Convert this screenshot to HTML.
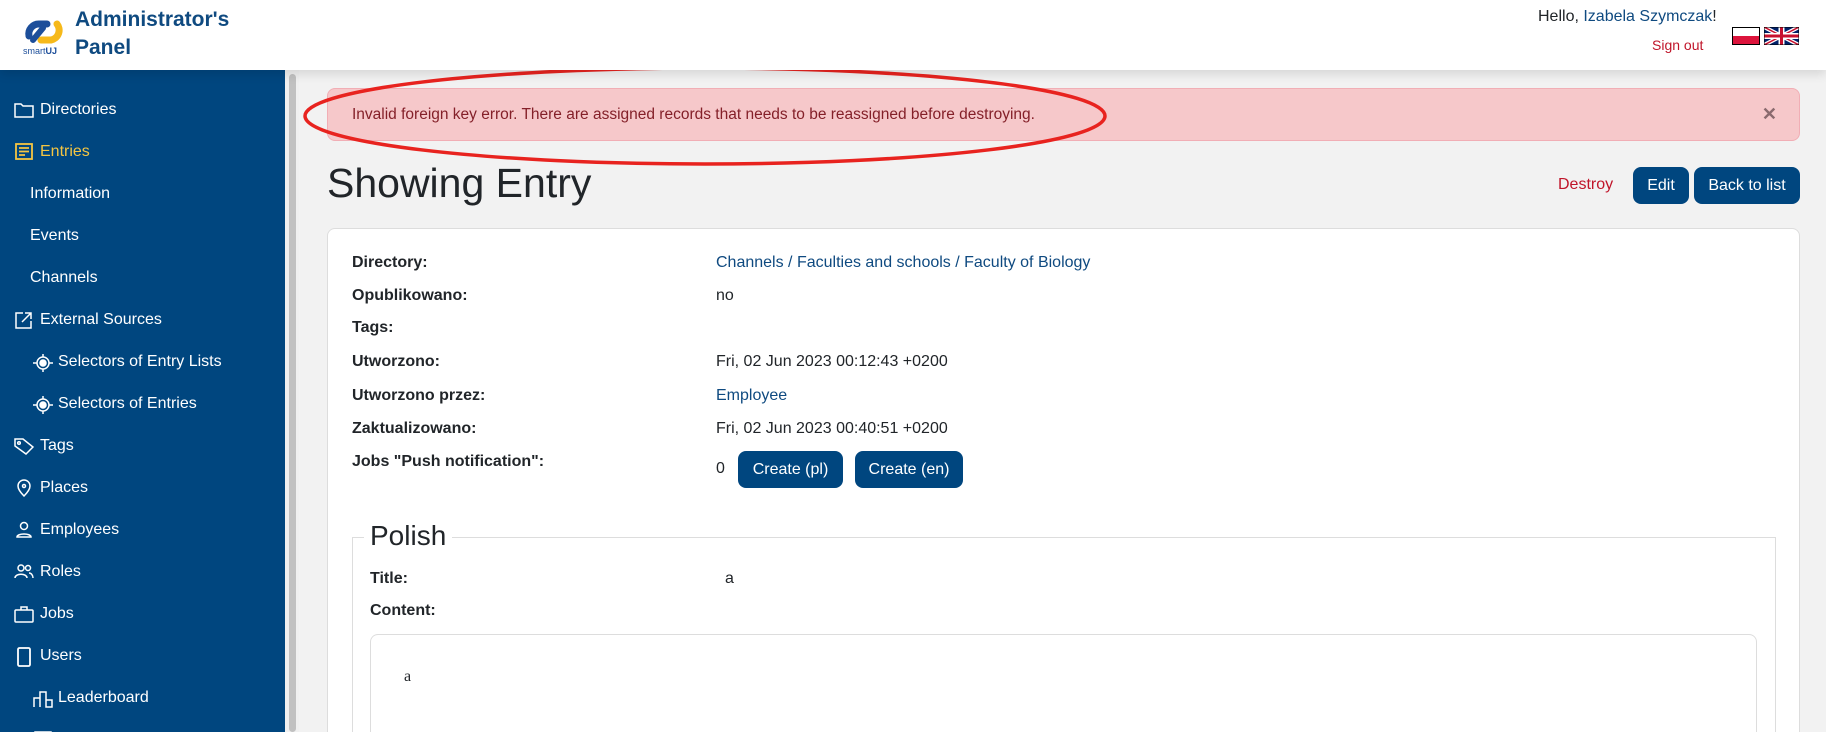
<!DOCTYPE html>
<html style="overflow:hidden;width:1826px;height:732px"><head><meta charset="utf-8"><style>
*{box-sizing:border-box;margin:0;padding:0}
body{width:1826px;height:732px;overflow:hidden;background:#f2f2f2;font-family:"Liberation Sans",sans-serif;color:#212529;position:relative}
.hdr{position:absolute;left:0;top:0;width:1826px;height:70px;background:#fff;box-shadow:0 4px 10px rgba(0,0,0,.12);z-index:2}
.title{position:absolute;left:75px;top:6px;font-size:21px;font-weight:bold;color:#0f4a80;line-height:28px}
.side{position:absolute;left:0;top:70px;width:285px;height:662px;background:#00467f}
.si{position:absolute;color:#fff;font-size:16px;line-height:20px;white-space:nowrap}
.si svg{position:absolute;left:-26px;top:1px}
.scroll{position:absolute;left:285px;top:70px;width:14px;height:662px;background:#f0f0f0}
.thumb{position:absolute;left:289px;top:74px;width:7px;height:658px;background:#c1c1c1;border-radius:4px}
.alert{position:absolute;left:327px;top:88px;width:1473px;height:53px;background:#f6c8ca;border:1px solid #f1aeb5;border-radius:8px;color:#842029;font-size:15.5px;line-height:51px;padding-left:24px}
.x{position:absolute;right:22px;top:0;color:#8a6a6e;font-weight:bold;font-size:18px}
h1{position:absolute;left:327px;top:160px;font-size:41px;font-weight:normal;color:#212529}
.btn{position:absolute;background:#00467f;color:#fff;border-radius:8px;font-size:16px;text-align:center}
.card{position:absolute;left:327px;top:228px;width:1473px;height:504px;background:#fff;border:1px solid #ddd;border-bottom:none;border-radius:8px 8px 0 0}
.l{position:absolute;left:352px;font-weight:bold;font-size:16px}
.v{position:absolute;left:716px;font-size:16px}
a{color:#0f4a80;text-decoration:none}
</style></head><body>
<div class="hdr">
<svg style="position:absolute;left:21px;top:10px" width="46" height="46" viewBox="0 0 46 46">
<path d="M8 26 a10 10 0 0 1 10-12 l8 0" stroke="#1c4e9a" stroke-width="7" fill="none" stroke-linecap="round"/>
<path d="M36 14 a10 10 0 0 1 -6 16 l-10 0" stroke="#f6b91a" stroke-width="7" fill="none" stroke-linecap="round"/>
<path d="M12 30 l10-12" stroke="#1c4e9a" stroke-width="6" stroke-linecap="round"/>
<text x="2" y="44" font-size="9" fill="#1c4e9a" font-family="Liberation Sans">smart<tspan font-weight="bold">UJ</tspan></text>
</svg>
<div class="title">Administrator's<br>Panel</div>
<div style="position:absolute;left:1538px;top:8px;font-size:16px">Hello, <a>Izabela Szymczak</a>!</div>
<div style="position:absolute;left:1652px;top:37px;font-size:14px;color:#c0152a">Sign out</div>
<div style="position:absolute;left:1732px;top:27px;width:28px;height:18px;border:1px solid #000"><div style="height:8px;background:#fff"></div><div style="height:8px;background:#dc143c"></div></div>
<svg style="position:absolute;left:1764px;top:27px" width="35" height="18" viewBox="0 0 35 18"><rect width="35" height="18" fill="#012169"/><path d="M0 0L35 18M35 0L0 18" stroke="#fff" stroke-width="4"/><path d="M0 0L35 18M35 0L0 18" stroke="#c8102e" stroke-width="1.5"/><path d="M17.5 0V18M0 9H35" stroke="#fff" stroke-width="6"/><path d="M17.5 0V18M0 9H35" stroke="#c8102e" stroke-width="3"/><rect width="35" height="18" fill="none" stroke="#000"/></svg>
</div>
<div class="side">
<div class="si" style="left:40px;top:30px"><svg width="20" height="18" viewBox="0 0 20 18" fill="none" stroke="#fff" stroke-width="1.5"><path d="M1 3h6l2 2h10v11H1z"/></svg>Directories</div>
<div class="si" style="left:40px;top:72px;color:#f4c542"><svg width="20" height="18" viewBox="0 0 20 18" fill="none" stroke="#f4c542" stroke-width="1.8"><rect x="2" y="1" width="16" height="15"/><path d="M5 5h10M5 8.5h10M5 12h6"/></svg>Entries</div>
<div class="si" style="left:30px;top:114px">Information</div>
<div class="si" style="left:30px;top:156px">Events</div>
<div class="si" style="left:30px;top:198px">Channels</div>
<div class="si" style="left:40px;top:240px"><svg width="20" height="18" viewBox="0 0 20 18" fill="none" stroke="#fff" stroke-width="1.5"><path d="M9 2H2v15h15v-7M11 2h6v6M17 2L8 11"/></svg>External Sources</div>
<div class="si" style="left:58px;top:282px"><svg width="22" height="20" viewBox="0 0 22 20" fill="none" stroke="#fff" stroke-width="1.5"><circle cx="11" cy="10" r="6"/><circle cx="11" cy="10" r="3" fill="#fff"/><path d="M11 1v3M11 16v3M1 10h4M17 10h4"/></svg>Selectors of Entry Lists</div>
<div class="si" style="left:58px;top:324px"><svg width="22" height="20" viewBox="0 0 22 20" fill="none" stroke="#fff" stroke-width="1.5"><circle cx="11" cy="10" r="6"/><circle cx="11" cy="10" r="3" fill="#fff"/><path d="M11 1v3M11 16v3M1 10h4M17 10h4"/></svg>Selectors of Entries</div>
<div class="si" style="left:40px;top:366px"><svg width="20" height="18" viewBox="0 0 20 18" fill="none" stroke="#fff" stroke-width="1.5"><path d="M1 2h8l10 8-7 7-11-8z"/><circle cx="5" cy="6" r="1.3"/></svg>Tags</div>
<div class="si" style="left:40px;top:408px"><svg width="20" height="18" viewBox="0 0 20 18" fill="none" stroke="#fff" stroke-width="1.5"><path d="M10 17c-4-4-6-7-6-10a6 6 0 0 1 12 0c0 3-2 6-6 10z"/><circle cx="10" cy="7" r="1.5"/></svg>Places</div>
<div class="si" style="left:40px;top:450px"><svg width="20" height="18" viewBox="0 0 20 18" fill="none" stroke="#fff" stroke-width="1.5"><circle cx="10" cy="5" r="3.5"/><path d="M3 16c0-4 14-4 14 0z"/></svg>Employees</div>
<div class="si" style="left:40px;top:492px"><svg width="20" height="18" viewBox="0 0 20 18" fill="none" stroke="#fff" stroke-width="1.5"><circle cx="7" cy="5" r="3"/><circle cx="14" cy="5" r="2.5"/><path d="M1 15c0-5 12-5 12 0M15 10c2 0 4 2 4 5"/></svg>Roles</div>
<div class="si" style="left:40px;top:534px"><svg width="20" height="18" viewBox="0 0 20 18" fill="none" stroke="#fff" stroke-width="1.5"><rect x="1" y="5" width="18" height="12" rx="1"/><path d="M7 5V2h6v3"/></svg>Jobs</div>
<div class="si" style="left:40px;top:576px"><svg width="20" height="20" viewBox="0 0 20 20" fill="none" stroke="#fff" stroke-width="1.8"><rect x="4" y="1" width="12" height="18" rx="1.5"/></svg>Users</div>
<div class="si" style="left:58px;top:618px"><svg width="22" height="20" viewBox="0 0 22 20" fill="none" stroke="#fff" stroke-width="1.5"><path d="M2 18V9h6v9M8 18V3h6v15M14 18v-7h6v7z"/></svg>Leaderboard</div>
<div class="si" style="left:58px;top:660px"><svg width="22" height="20" viewBox="0 0 22 20" fill="none" stroke="#fff" stroke-width="1.5"><rect x="3" y="1" width="16" height="16"/></svg></div>
</div>
<div class="scroll"></div><div class="thumb"></div>
<div class="alert">Invalid foreign key error. There are assigned records that needs to be reassigned before destroying.<span class="x">✕</span></div>
<svg style="position:absolute;left:300px;top:64px" width="812" height="106"><ellipse cx="405" cy="52" rx="400" ry="48" fill="none" stroke="#e8231f" stroke-width="3.5"/></svg>
<h1>Showing Entry</h1>
<div style="position:absolute;left:1558px;top:176px;color:#c0152a;font-size:16px">Destroy</div>
<div class="btn" style="left:1633px;top:167px;width:56px;height:37px;line-height:37px">Edit</div>
<div class="btn" style="left:1694px;top:167px;width:106px;height:37px;line-height:37px">Back to list</div>
<div class="card"></div>
<div class="l" style="top:254px">Directory:</div><div class="v" style="top:254px"><a>Channels / Faculties and schools / Faculty of Biology</a></div>
<div class="l" style="top:287px">Opublikowano:</div><div class="v" style="top:287px">no</div>
<div class="l" style="top:319px">Tags:</div>
<div class="l" style="top:353px">Utworzono:</div><div class="v" style="top:353px">Fri, 02 Jun 2023 00:12:43 +0200</div>
<div class="l" style="top:387px">Utworzono przez:</div><div class="v" style="top:387px"><a>Employee</a></div>
<div class="l" style="top:420px">Zaktualizowano:</div><div class="v" style="top:420px">Fri, 02 Jun 2023 00:40:51 +0200</div>
<div class="l" style="top:453px">Jobs "Push notification":</div><div class="v" style="top:460px">0</div>
<div class="btn" style="left:738px;top:451px;width:105px;height:37px;line-height:37px">Create (pl)</div>
<div class="btn" style="left:855px;top:451px;width:108px;height:37px;line-height:37px">Create (en)</div>
<div style="position:absolute;left:352px;top:537px;width:1424px;height:195px;border:1px solid #ddd;border-bottom:none"></div>
<div style="position:absolute;left:364px;top:520px;background:#fff;padding:0 6px;font-size:28px">Polish</div>
<div class="l" style="left:370px;top:570px">Title:</div><div class="v" style="left:725px;top:570px">a</div>
<div class="l" style="left:370px;top:602px">Content:</div>
<div style="position:absolute;left:370px;top:634px;width:1387px;height:98px;border:1px solid #ddd;border-bottom:none;border-radius:8px 8px 0 0"></div>
<div style="position:absolute;left:404px;top:668px;font-family:'Liberation Serif',serif;font-size:16px">a</div>
</body></html>
